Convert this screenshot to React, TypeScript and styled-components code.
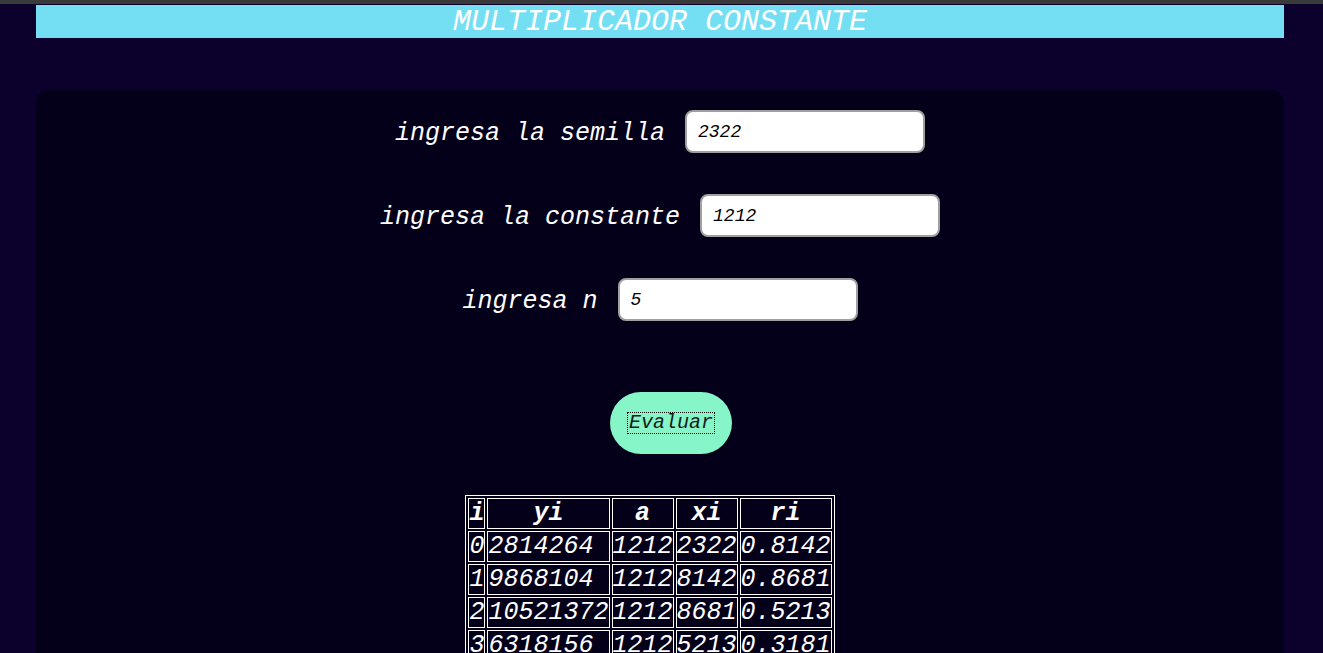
import React from "react";
import styled, { createGlobalStyle } from "styled-components";

const GlobalStyle = createGlobalStyle`
  html, body {
    margin: 0;
    padding: 0;
    background: #0c002c;
    font-family: "Liberation Mono", "Courier New", monospace;
  }
  * { box-sizing: border-box; }
`;

const TopStrip = styled.div`
  height: 4px;
  background: #3a3a3a;
  margin-bottom: 1px;
`;

const Page = styled.div`
  padding: 0 39px 0 36px;
`;

const Header = styled.h1`
  margin: 0;
  height: 33px;
  line-height: 34px;
  background: #74dff3;
  color: #ffffff;
  font-family: "Liberation Mono", "Courier New", monospace;
  font-style: italic;
  font-weight: normal;
  font-size: 30px;
  text-align: center;
`;

const Card = styled.main`
  margin-top: 52px;
  background: #05001a;
  border-radius: 12px 12px 0 0;
  padding-top: 20px;
  min-height: 600px;
  display: flex;
  flex-direction: column;
  align-items: center;
`;

const Form = styled.div`
  display: flex;
  flex-direction: column;
  align-items: center;
  gap: 41px;
`;

const Row = styled.div`
  display: flex;
  align-items: center;
  justify-content: center;
  gap: 20px;
  height: 43px;
`;

const Label = styled.label`
  color: #ffffff;
  font-family: "Liberation Mono", "Courier New", monospace;
  font-style: italic;
  font-size: 25px;
  padding-top: 3px;
`;

const Input = styled.input`
  width: 240px;
  height: 43px;
  border: 2px solid #a0a0a0;
  border-radius: 8px;
  background: #ffffff;
  padding: 0 11px;
  font-family: "Liberation Mono", "Courier New", monospace;
  font-style: italic;
  font-size: 18px;
  color: #000000;
  outline: none;
`;

const Button = styled.button`
  margin-top: 71px;
  margin-left: 22px;
  width: 122px;
  height: 62px;
  border: none;
  border-radius: 31px;
  background: #86f5c8;
  display: flex;
  align-items: center;
  justify-content: center;
  cursor: pointer;
  padding: 0;
`;

const ButtonText = styled.span`
  font-family: "Liberation Mono", "Courier New", monospace;
  font-style: italic;
  font-size: 20px;
  color: #102018;
  border: 1px dotted #000000;
  padding: 0 1px;
  line-height: 20px;
`;

const Table = styled.table`
  margin-top: 41px;
  margin-right: 20px;
  border: 1px solid #ffffff;
  border-spacing: 2px;
  color: #ffffff;
  font-family: "Liberation Mono", "Courier New", monospace;
  font-style: italic;
  font-size: 25px;
`;

const Th = styled.th`
  border: 1px solid #ffffff;
  padding: 1px 0;
  font-weight: bold;
  text-align: center;
  line-height: 27px;
`;

const Td = styled.td`
  border: 1px solid #ffffff;
  padding: 1px 0;
  text-align: left;
  line-height: 27px;
  white-space: nowrap;
`;

const rows = [
  { i: 0, yi: "2814264", a: "1212", xi: "2322", ri: "0.8142" },
  { i: 1, yi: "9868104", a: "1212", xi: "8142", ri: "0.8681" },
  { i: 2, yi: "10521372", a: "1212", xi: "8681", ri: "0.5213" },
  { i: 3, yi: "6318156", a: "1212", xi: "5213", ri: "0.3181" },
  { i: 4, yi: "3855372", a: "1212", xi: "3181", ri: "0.8553" },
];

export default function App() {
  return (
    <>
      <GlobalStyle />
      <TopStrip />
      <Page>
        <Header>MULTIPLICADOR CONSTANTE</Header>
        <Card>
          <Form>
            <Row>
              <Label>ingresa la semilla</Label>
              <Input defaultValue="2322" />
            </Row>
            <Row>
              <Label>ingresa la constante</Label>
              <Input defaultValue="1212" />
            </Row>
            <Row>
              <Label>ingresa n</Label>
              <Input defaultValue="5" />
            </Row>
          </Form>
          <Button>
            <ButtonText>Evaluar</ButtonText>
          </Button>
          <Table>
            <thead>
              <tr>
                <Th>i</Th>
                <Th>yi</Th>
                <Th>a</Th>
                <Th>xi</Th>
                <Th>ri</Th>
              </tr>
            </thead>
            <tbody>
              {rows.map((r) => (
                <tr key={r.i}>
                  <Td>{r.i}</Td>
                  <Td>{r.yi}</Td>
                  <Td>{r.a}</Td>
                  <Td>{r.xi}</Td>
                  <Td>{r.ri}</Td>
                </tr>
              ))}
            </tbody>
          </Table>
        </Card>
      </Page>
    </>
  );
}
